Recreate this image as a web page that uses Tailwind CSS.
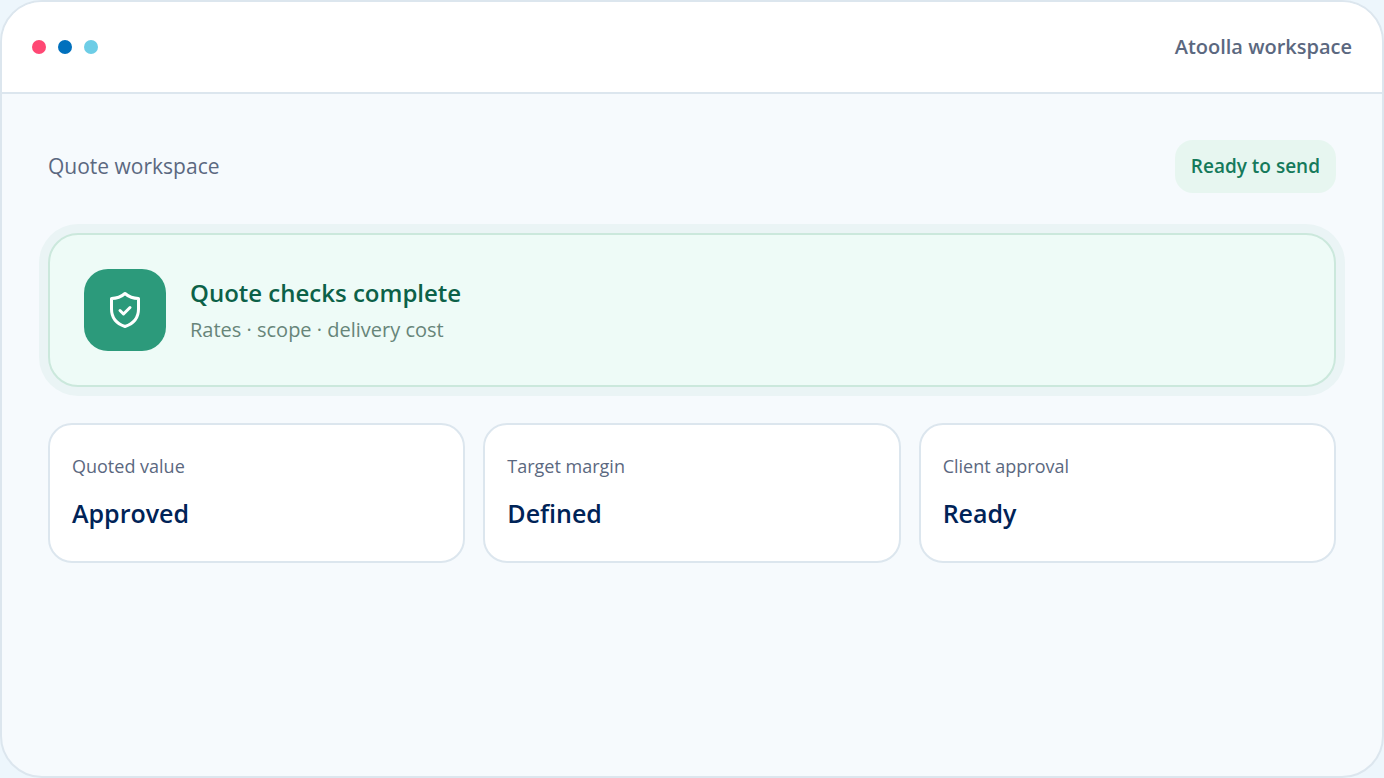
<!DOCTYPE html>
<html lang="en">
<head>
    <meta charset="UTF-8">
    <meta name="viewport" content="width=device-width, initial-scale=1.0">
    <title>Atoolla workspace</title>
    <script src="https://cdn.jsdelivr.net/npm/@tailwindcss/browser@4"></script>
</head>
<body class="bg-[#edf6fc] font-['Open_Sans',sans-serif] text-[#5b6880]">
    <div class="flex min-h-screen flex-col overflow-hidden rounded-[42px] border-2 border-[#dce6ee] bg-[#f6fafd]">
        <header class="flex h-[92px] items-center justify-between border-b-2 border-[#dce6ee] bg-white px-[30px]">
            <div class="flex gap-3">
                <span class="size-[14px] rounded-full bg-[#ff4874]"></span>
                <span class="size-[14px] rounded-full bg-[#0070bd]"></span>
                <span class="size-[14px] rounded-full bg-[#6dcde6]"></span>
            </div>
            <p class="text-[20px] leading-7 font-semibold">Atoolla workspace</p>
        </header>

        <main class="flex-1 p-[46px]">
            <div class="flex items-center justify-between">
                <h1 class="pb-0.5 text-[21px] leading-7">Quote workspace</h1>
                <span class="rounded-[18px] bg-[#e7f6f0] px-4 py-3 text-[19px] leading-[29px] font-semibold text-[#157a5b]">Ready to send</span>
            </div>

            <section class="mt-10 flex items-center gap-6 rounded-[30px] border-2 border-[#cbe8dc] bg-[#eefbf7] p-[34px] ring-[9px] ring-[#eaf4f5]">
                <div class="flex size-[82px] shrink-0 items-center justify-center rounded-[24px] bg-[#2c9a7b] text-white">
                    <svg class="size-[42px]" viewBox="0 0 42 42" fill="none" stroke="currentColor" stroke-width="3" stroke-linecap="round" stroke-linejoin="round">
                        <path d="M21 4.500C17 8 12.500 9.500 7.500 9.500V20C7.500 29 12 34.500 21 37.500C30 34.500 34.500 29 34.500 20V9.500C29.500 9.500 25 8 21 4.500Z" />
                        <path d="M16 21.500L19.500 25L26 18.500" />
                    </svg>
                </div>
                <div>
                    <h2 class="text-[24px] leading-[34px] font-semibold text-[#0c6148]">Quote checks complete</h2>
                    <p class="mt-1.5 text-[20px] leading-7 text-[#678579]">Rates · scope · delivery cost</p>
                </div>
            </section>

            <dl class="mt-9 grid grid-cols-3 gap-[18px]">
                <div class="rounded-[24px] border-2 border-[#dce6ee] bg-white px-[22px] pt-7 pb-[30px]">
                    <dt class="text-[18px] leading-[26px]">Quoted value</dt>
                    <dd class="mt-4 text-[25px] leading-9 font-semibold text-[#002357]">Approved</dd>
                </div>
                <div class="rounded-[24px] border-2 border-[#dce6ee] bg-white px-[22px] pt-7 pb-[30px]">
                    <dt class="text-[18px] leading-[26px]">Target margin</dt>
                    <dd class="mt-4 text-[25px] leading-9 font-semibold text-[#002357]">Defined</dd>
                </div>
                <div class="rounded-[24px] border-2 border-[#dce6ee] bg-white px-[22px] pt-7 pb-[30px]">
                    <dt class="text-[18px] leading-[26px]">Client approval</dt>
                    <dd class="mt-4 text-[25px] leading-9 font-semibold text-[#002357]">Ready</dd>
                </div>
            </dl>
        </main>
    </div>
</body>
</html>
